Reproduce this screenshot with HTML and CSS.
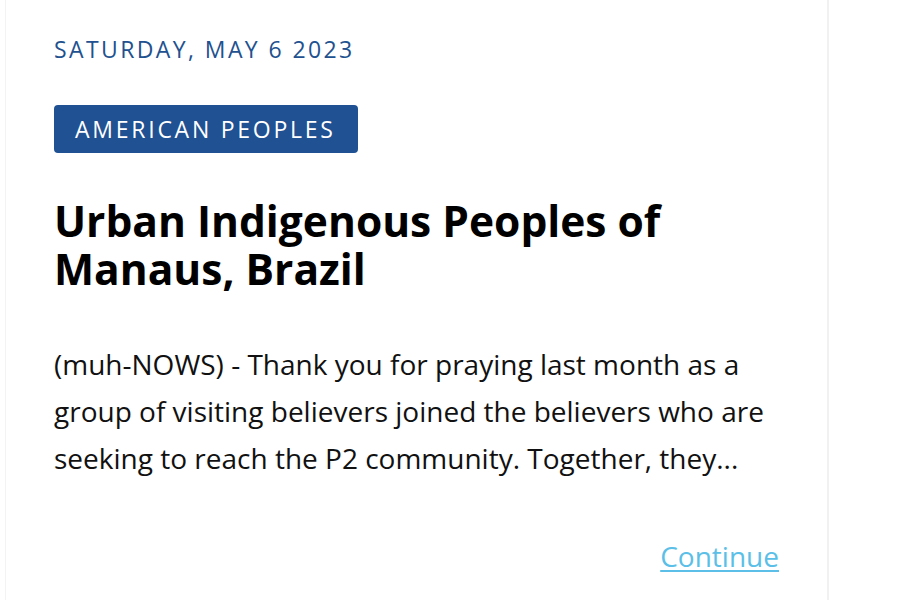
FILE: index.html
```html
<!DOCTYPE html>
<html>
<head>
<meta charset="utf-8">
<link rel="stylesheet" href="styles.css">
</head>
<body>
<div class="page">
  <article class="card">
    <div class="date">Saturday, May 6 2023</div>
    <div class="tags"><span class="badge">American Peoples</span></div>
    <h2 class="title">Urban Indigenous Peoples of Manaus, Brazil</h2>
    <p class="excerpt">(muh-NOWS) - Thank you for praying last month as a group of visiting believers joined the believers who are seeking to reach the P2 community. Together, they...</p>
    <div class="more"><a href="#" class="continue">Continue</a></div>
  </article>
</div>
</body>
</html>
```
FILE: styles.css
```css
html, body {
  margin: 0;
  padding: 0;
  background: #ffffff;
}
body {
  font-family: "Open Sans", "Liberation Sans", sans-serif;
  color: #111;
}
.page {
  display: flex;
  padding-left: 5px;
  height: 600px;
  overflow: hidden;
}
.card {
  width: 725px;
  padding: 0 48px 0 48px;
  border-left: 1px solid #f3f3f3;
  border-right: 2px solid #f1f1f1;
  box-sizing: content-box;
}
.date {
  margin-top: 33px;
  font-size: 23px;
  line-height: 32px;
  letter-spacing: 2.4px;
  text-transform: uppercase;
  color: #22518f;
}
.tags {
  margin-top: 40px;
  display: flex;
}
.badge {
  display: inline-block;
  background: #1f5193;
  color: #fff;
  border-radius: 4px;
  padding: 0 22px 0 21px;
  height: 48px;
  line-height: 48px;
  font-size: 23px;
  letter-spacing: 2.75px;
  text-transform: uppercase;
}
.title {
  margin: 44px 0 0 0;
  font-size: 42.5px;
  line-height: 48px;
  font-weight: 700;
  color: #000;
}
.excerpt {
  margin: 48px 0 0 0;
  font-size: 28px;
  line-height: 47px;
  color: #111;
}
.more {
  display: flex;
  justify-content: flex-end;
  margin-top: 55px;
}
.continue {
  font-size: 28px;
  line-height: 38px;
  color: #5bbfe7;
  text-decoration: underline;
  text-decoration-thickness: 2px;
  text-underline-offset: 3px;
}
```
